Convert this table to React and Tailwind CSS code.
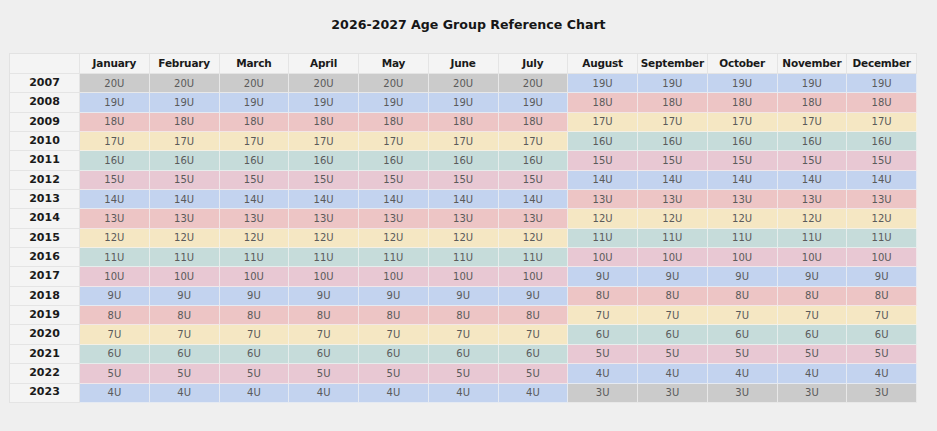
const months = [
  "January", "February", "March", "April", "May", "June",
  "July", "August", "September", "October", "November", "December",
];

// colour per age group, repeating every 5 groups (20U and 3U are grey)
const palette = {
  grey: "bg-[#cbcbcb]",
  blue: "bg-[#c3d3ef]",
  red: "bg-[#edc5c5]",
  yellow: "bg-[#f5e7c3]",
  teal: "bg-[#c6dcda]",
  pink: "bg-[#e8c8d3]",
};

const cycle = ["blue", "red", "yellow", "teal", "pink"];

function colorFor(age) {
  if (age >= 20 || age <= 3) return palette.grey;
  return palette[cycle[(19 - age) % 5]];
}

const years = Array.from({ length: 17 }, (_, i) => 2007 + i);

function Row({ year }) {
  const base = 2026 - year;
  return (
    <>
      <div className="flex items-center justify-center border-r border-b border-[#e4e4e4] bg-[#f4f4f4] text-[11px] font-bold text-[#1a1a1a]">
        {year}
      </div>
      {months.map((m, i) => {
        const age = i < 7 ? base + 1 : base;
        return (
          <div
            key={m}
            className={`flex items-center justify-center border-r border-b border-[#f3f3f3]/70 text-[10px] text-[#5a5a5a] ${colorFor(age)}`}
          >
            {age}U
          </div>
        );
      })}
    </>
  );
}

export default function App() {
  return (
    <div
      className="min-h-[431px] w-[937px] bg-[#efefef] pt-[15px]"
      style={{ fontFamily: '"DejaVu Sans", "Noto Sans", sans-serif' }}
    >
      <h1 className="text-center text-[12.6px] font-bold text-[#161616] leading-5">
        2026-2027 Age Group Reference Chart
      </h1>

      <div className="ml-[9px] mt-[18px] w-[908px] border-t border-l border-[#e2e2e2]">
        <div className="grid grid-cols-[70px_repeat(12,1fr)] grid-rows-[20px_repeat(17,19.35px)]">
          <div className="border-r border-b border-[#e4e4e4] bg-[#f4f4f4]" />
          {months.map((m) => (
            <div
              key={m}
              className="flex items-center justify-center border-r border-b border-[#e4e4e4] bg-[#f4f4f4] text-[10.5px] font-bold text-[#1a1a1a] tracking-[-0.2px]"
            >
              {m}
            </div>
          ))}
          {years.map((y) => (
            <Row key={y} year={y} />
          ))}
        </div>
      </div>
    </div>
  );
}
